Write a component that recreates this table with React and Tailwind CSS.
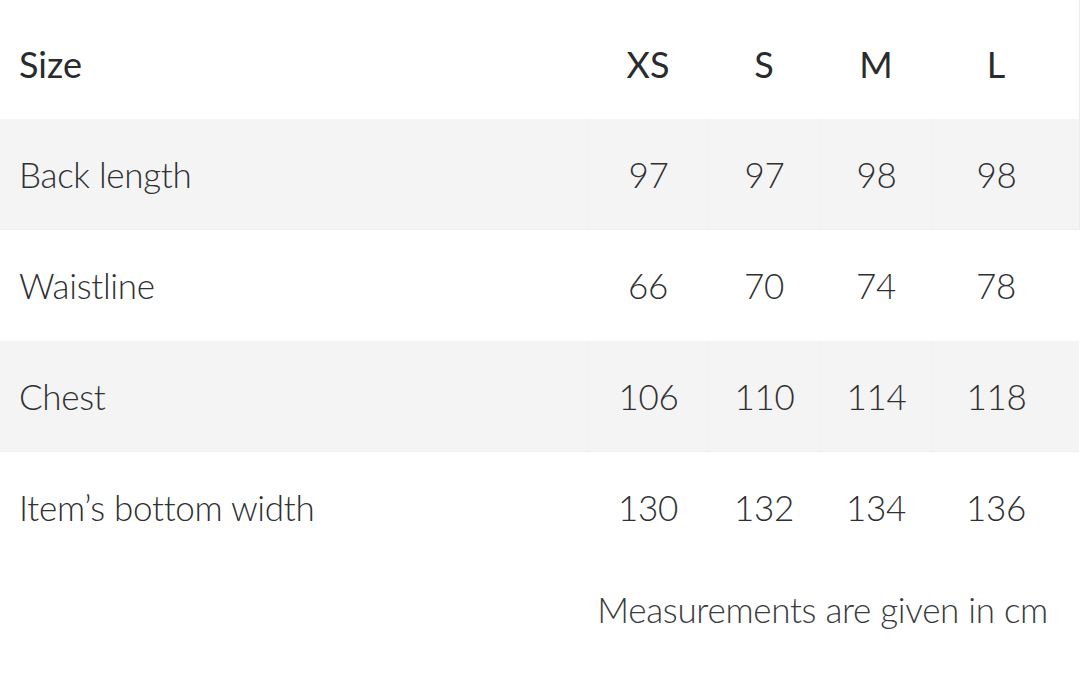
const sizes = ["XS", "S", "M", "L"];

const rows = [
    { label: "Back length", values: [97, 97, 98, 98] },
    { label: "Waistline", values: [66, 70, 74, 78] },
    { label: "Chest", values: [106, 110, 114, 118] },
    { label: "Item’s bottom width", values: [130, 132, 134, 136] },
];

const grid = "grid grid-cols-[588px_120px_112px_112px_128px_1fr]";

export default function App() {
    return (
        <div
            className="w-[1080px] h-[687px] bg-white text-[#2e3031] overflow-hidden"
            style={{ fontFamily: "Lato, 'Noto Sans', sans-serif" }}>
            {/* Header */}
            <div
                className={`${grid} w-[1080px] h-[119px] pt-[9px] items-center text-[36px] font-normal text-[#292b2d] border-r border-[#ececec]`}>
                <div className="pl-[19px]">Size</div>
                {sizes.map((s) => (
                    <div key={s} className="text-center">
                        {s}
                    </div>
                ))}
                <div />
            </div>
            {rows.map((row, i) => (
                <div
                    key={row.label}
                    className={`${grid} h-[111px] text-[35px] font-light tracking-[-0.3px] ${
                        i % 2 === 0 ? "bg-[#f4f4f4] border-b border-[#efefef]" : "bg-white"
                    } ${i === 0 ? "w-[1080px] border-r border-r-[#ececec]" : "w-[1079px]"}`}>
                    <div className="pl-[19px] flex items-center">{row.label}</div>
                    {row.values.map((v, j) => (
                        <div
                            key={j}
                            className={`flex items-center justify-center ${
                                i % 2 === 0 ? "border-l border-[#f0f0f0]" : ""
                            }`}>
                            {v}
                        </div>
                    ))}
                    <div />
                </div>
            ))}
            <div className="flex justify-end pr-[32px] pt-[20px] text-[35px] font-light tracking-[-0.3px] text-[#3a3b3c]">
                Measurements are given in cm
            </div>
        </div>
    );
}
